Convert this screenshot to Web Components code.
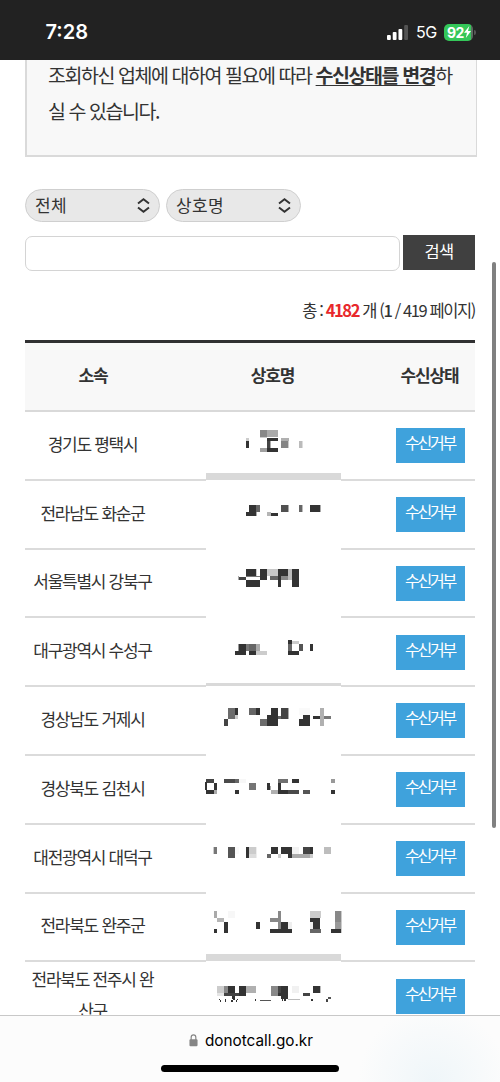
<!DOCTYPE html>
<html lang="ko">
<head>
<meta charset="utf-8">
<title>donotcall.go.kr</title>
<style>
html,body{margin:0;height:100%;overflow:hidden;background:#fff}
body{font-family:"Noto Sans CJK KR","Noto Sans",sans-serif;color:#333}
</style>
</head>
<body>
<phone-screen></phone-screen>
<script>
const define=(name,html,setup)=>customElements.define(name,class extends HTMLElement{
  connectedCallback(){
    if(this.shadowRoot)return;
    this.attachShadow({mode:'open'}).innerHTML=html;
    if(setup)setup(this,this.shadowRoot);
  }
});

define('status-bar',`<style>
:host{display:flex;box-sizing:border-box;height:60px;flex:none;background:#222;color:#fff;font-family:Inter,sans-serif;padding:4px 24px 0 45.5px;align-items:center;justify-content:space-between}
time{font-size:20px;font-weight:600;letter-spacing:0}
.right{display:flex;align-items:center}
.net{font-size:16px;margin:0 7px 0 8px;letter-spacing:-.3px}
.bat{display:flex;align-items:center}
.body{box-sizing:border-box;width:29px;height:17px;border-radius:5px;background:linear-gradient(90deg,#34c759 27px,#5b6b5f 27px);display:flex;align-items:center;padding-left:3px;font-weight:700;font-size:14px;letter-spacing:-.6px}
.tip{width:2px;height:5px;border-radius:0 2px 2px 0;background:#555;margin-left:1px}
svg{display:block}
</style><time>7:28</time><div class="right">
<svg width="21" height="15" viewBox="0 0 22 15" preserveAspectRatio="none" fill="#fff"><rect x="0" y="10" width="4" height="5" rx="1"/><rect x="6" y="7" width="4" height="8" rx="1"/><rect x="12" y="4" width="4" height="11" rx="1"/><rect x="18" y="0" width="4" height="15" rx="1" fill="#535353"/></svg>
<span class="net">5G</span><div class="bat"><div class="body">92<svg width="7" height="12" viewBox="0 0 7 12" fill="#fff"><path d="M5.3 0 0 6.7h3L1.8 12 7 5H4z"/></svg></div><div class="tip"></div></div></div>`);

define('notice-box',`<style>
:host{display:block;box-sizing:border-box;width:452px;height:97px;margin-left:25px;border:2px solid #dadada;border-width:0 1.5px 2px 2px;background:#f8f8f8;padding:0 0 0 21px;font-size:19.5px;line-height:36px;letter-spacing:-1.44px;white-space:nowrap}
div{margin-top:-3px}
</style><div><slot></slot></div>`);

define('pill-select',`<style>
:host{display:flex;box-sizing:border-box;width:135px;height:33px;border:1px solid #cfcfcf;border-radius:17px;background:#e8e8e8;align-items:center;justify-content:space-between;padding:0 9px;font-size:17px;letter-spacing:.3px;line-height:31px}
span{position:relative;top:-1px}
svg{display:block}
</style><span><slot></slot></span><svg width="13" height="15" viewBox="0 0 13 15" fill="none" stroke="#333" stroke-width="2"><path d="M1 5.5 6.5 1.3 12 5.5M1 9.5l5.5 4.2L12 9.5"/></svg>`);

define('search-bar',`<style>
:host{display:flex;flex-direction:column;padding:32px 25px 0;gap:13px}
.s{display:flex;gap:6px}
.q{display:flex;gap:3px}
.i{box-sizing:border-box;width:375px;height:35px;margin-top:1px;border:1.5px solid #d4d4d4;border-radius:7px;background:#fff}
.b{width:72px;height:35px;background:#404040;color:#fff;font-size:16.5px;line-height:32px;text-align:center;letter-spacing:-.8px}
</style><div class="s"><pill-select>전체</pill-select><pill-select>상호명</pill-select></div><div class="q"><div class="i"></div><div class="b">검색</div></div>`);

define('result-count',`<style>
:host{display:block;height:31px;padding:24px 25px 14px 0;line-height:31px;text-align:right;font-size:16.5px;letter-spacing:-1.4px;white-space:nowrap}
b{color:#e8282b}i{font-style:normal;font-weight:500}
</style>총 : <b>4182</b> 개 (<i>1</i> / 419 페이지)`);

define('list-head',`<style>
:host{display:grid;grid-template-columns:136px 223px 91px;box-sizing:border-box;height:72px;border-top:3px solid #303132;border-bottom:2px solid #d9d9d9;background:#f8f8f8;font-size:17px;font-weight:700;letter-spacing:-1.15px;text-align:center;line-height:64px}
</style><span>소속</span><span>상호명</span><span>수신상태</span>`);

define('list-row',`<style>
:host{display:grid;grid-template-columns:136px 223px 91px;box-sizing:border-box;height:68.8px;border-bottom:2px solid #dbdbdb;align-items:center;font-size:17px;letter-spacing:-1.28px;line-height:31px;text-align:center}
.n{height:66.8px;align-self:start;display:flex;justify-content:center}
svg{display:block;overflow:visible}
.a{padding:0 6px 0 5px;margin-top:-4px}
.b{width:69px;height:35px;background:#3fa2dc;color:#fff;font-size:16px;line-height:29px;letter-spacing:-2.2px;margin:.6px 0 0 12px}
.b span{margin-left:-1px}
</style><div class="a"><slot></slot></div><div class="n"><svg width="160" height="68.8" shape-rendering="crispEdges"></svg></div><div class="b"><span>수신거부</span></div>`,(el,root)=>{
  const i=+el.getAttribute('index'),top=412+68.8*i,svg=root.querySelector('svg');
  svg.setAttribute('viewBox',`193 ${top} 160 68.8`);
  const m=mosaics[i];
  const y=Math.floor(top+66);
  let s=i<8?`<rect x="206" y="${y-1}" width="135.5" height="5" fill="#fff"/>`:'';
  if(m.band)s+=`<rect x="206" y="${m.band[0]}" width="135.5" height="${m.band[1]}" fill="#d9d9d9"/>`;
  s+=`<g transform="translate(196 ${m.y}) scale(.33333)">`+m.r.map(([x,y,w,h,c='333'])=>`<rect x="${x}" y="${y}" width="${w}" height="${h}" fill="#${c}"/>`).join('')+'</g>';
  svg.innerHTML=s;
});

/* Pixelated company names: x, y, width, height and shade of each block. */
const mosaics=[
{y:420,band:[473,7],r:[[150,53,9,10,'ccc'],[150,63,9,21],[192,30,21,21,'888'],[213,30,33,21,'aaa'],[192,51,21,2,'ccc'],[213,53,33,10],[213,63,9,21,'444'],[222,63,3,21,'aaa'],[213,84,33,12],[192,84,21,12,'a0a0a0'],[255,53,23,10,'b0b0b0'],[255,63,21,21,'858585'],[276,63,3,21,'ccc'],[309,63,9,21,'bbb'],[318,63,3,21,'ddd']]},
{y:420,r:[[159,255,21,33],[180,255,12,21,'666'],[150,276,9,12],[180,276,4,12,'aaa'],[213,276,12,12,'b5b5b5'],[225,279,21,9],[255,255,21,21,'505050'],[276,255,3,21,'aaa'],[309,255,9,21,'666'],[318,255,3,21,'bbb'],[342,255,30,21],[372,255,3,21,'aaa']]},
{y:530,r:[[150,117,30,21],[180,117,3,21,'ccc'],[150,138,42,2,'777'],[129,141,21,9,'444'],[126,138,3,12,'aaa'],[150,150,42,21],[192,117,21,33],[213,117,33,21,'c8c8c8'],[222,138,24,12,'666'],[246,117,30,21],[246,138,9,33],[255,138,21,12,'888'],[276,117,12,33,'bbb'],[288,117,21,54]]},
{y:530,band:[683,3],r:[[129,342,21,21],[126,342,3,21,'999'],[117,363,33,12],[150,342,9,21,'777'],[159,342,21,21,'666'],[180,342,12,21,'aaa'],[150,363,9,12,'fff'],[159,363,21,12],[180,363,33,12,'ccc'],[276,330,12,12],[288,333,21,9,'ccc'],[276,342,12,21,'666'],[276,363,33,12],[309,342,12,21,'555'],[342,342,9,21]]},
{y:660,r:[[96,144,21,33,'6c6c6c'],[117,144,10,21],[117,165,10,12,'ccc'],[84,177,12,21,'444'],[159,144,21,21,'666'],[180,144,12,21],[225,144,21,54],[213,165,12,33],[192,177,21,21,'6c6c6c'],[255,144,21,33,'444'],[246,168,10,9,'666'],[276,144,3,33,'aaa'],[309,144,33,21,'fafafa'],[321,165,21,33],[309,177,12,21],[351,168,21,9],[384,168,21,9,'777'],[372,144,12,54,'b0b0b0']]},
{y:660,r:[[30,357,24,12,'444'],[27,366,6,25],[30,391,24,10],[54,369,9,21],[54,390,9,12,'aaa'],[84,357,33,12,'4a4a4a'],[117,357,11,12,'666'],[117,390,11,12],[128,357,22,12,'f7f7f7'],[159,369,21,21,'757575'],[213,369,9,21],[222,378,3,12,'aaa'],[225,390,21,12,'b0b0b0'],[246,357,31,12,'707070'],[246,369,9,33],[246,390,30,12],[276,390,33,12,'4a4a4a'],[288,357,21,12],[320,390,22,12,'555'],[405,357,12,12,'999'],[405,390,12,12]]},
{y:800,r:[[54,141,9,21,'777'],[51,141,3,21,'ccc'],[96,141,21,33,'555'],[117,141,12,21,'fafafa'],[150,141,9,33],[159,141,21,21,'ccc'],[159,162,21,12,'ddd'],[180,141,3,33,'eee'],[225,141,21,21],[213,162,12,12,'666'],[255,141,33,21],[246,162,9,12,'ccc'],[276,162,12,12],[288,141,21,21,'f2f2f2'],[321,141,22,21,'444'],[288,162,54,12,'aaa'],[342,141,9,21],[342,162,9,12,'ccc'],[384,141,21,21,'bdbdbd']]},
{y:900,band:[954,7],r:[[54,33,9,21,'aaa'],[63,54,21,12,'b5b5b5'],[84,66,12,31],[54,87,9,10],[96,33,21,21,'f7f7f7'],[180,66,12,21],[246,33,9,54,'888'],[222,54,24,12,'888'],[255,66,21,31],[276,66,12,21,'eee'],[222,87,66,10],[342,33,32,21,'ccc'],[351,54,21,33],[342,54,9,12],[342,66,9,21,'eee'],[342,87,32,10,'666'],[417,33,18,33,'888'],[417,66,18,21,'999'],[435,33,3,64,'ccc'],[405,87,30,10]]},
{y:900,r:[[63,258,21,21,'ccc'],[63,279,21,10,'e5e5e5'],[84,258,12,21,'888'],[96,258,21,21],[84,279,33,9,'444'],[108,288,9,9],[129,258,21,30],[117,279,12,9,'444'],[150,258,30,21,'b0b0b0'],[69,297,3,5],[72,302,4,4],[87,298,4,8],[105,300,5,6],[111,297,5,4],[120,302,3,4],[123,298,3,4],[177,298,4,6],[193,300,32,5,'555'],[225,258,21,30,'888'],[246,258,10,21,'444'],[246,279,9,9],[255,258,21,40],[257,298,5,7],[265,298,4,7],[276,297,36,3,'bbb'],[288,258,21,21,'f1f1f1'],[321,279,21,11,'444'],[345,298,5,7],[351,258,21,21],[372,258,3,21,'bbb'],[396,291,9,7,'555'],[391,299,5,7,'444']]}
];

define('company-list',`<style>:host{display:block;width:450px;margin-left:25px}</style><list-head></list-head><div></div>`,(el,root)=>{
  root.querySelector('div').innerHTML=['경기도 평택시','전라남도 화순군','서울특별시 강북구','대구광역시 수성구','경상남도 거제시','경상북도 김천시','대전광역시 대덕구','전라북도 완주군','전라북도 전주시 완<br>산구'].map((t,i)=>`<list-row index="${i}">${t}</list-row>`).join('');
});

define('address-bar',`<style>
:host{display:block;box-sizing:border-box;height:67px;flex:none;border-top:1px solid #c8c8c8;background:radial-gradient(circle at 433px 65px,#eff6f9 0,rgba(250,252,253,0) 75px),#fcfcfc;color:#000;font-family:Inter,sans-serif;z-index:1}
.u{display:flex;height:49px;align-items:center;justify-content:center;gap:7px;font-size:15.3px;padding-left:2px}
.h{width:178px;height:7px;border-radius:4px;background:#000;margin:0 auto}
svg{display:block}
</style><div class="u"><svg width="9" height="13" viewBox="0 0 10 13" preserveAspectRatio="none"><path d="M2.4 6V3.4a2.6 2.6 0 0 1 5.2 0V6" fill="none" stroke="#858585" stroke-width="1.3"/><rect x=".5" y="5.3" width="9" height="7" rx="1.2" fill="#858585"/></svg><span>donotcall.go.kr</span></div><div class="h"></div>`);

define('phone-screen',`<style>
:host{display:flex;flex-direction:column;width:500px;height:1082px;overflow:hidden}
main{height:955px;flex:none;overflow:hidden;position:relative}
notice-box{height:100px}
.bar{position:absolute;left:492px;top:202px;width:4px;height:566px;border-radius:2px;background:#808080}
b{text-decoration:underline;text-decoration-thickness:1px;text-underline-offset:2px}
</style><status-bar></status-bar><main><notice-box>조회하신 업체에 대하여 필요에 따라 <b>수신상태를 변경</b>하<br>실 수 있습니다.</notice-box><search-bar></search-bar><result-count></result-count><company-list></company-list><div class="bar"></div></main><address-bar></address-bar>`);
</script>
</body>
</html>
